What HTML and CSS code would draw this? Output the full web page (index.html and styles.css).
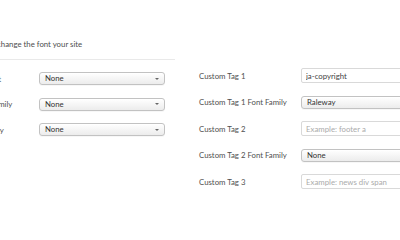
FILE: index.html
```html
<!DOCTYPE html>
<html>
<head>
<meta charset="utf-8">
<link rel="stylesheet" href="styles.css">
</head>
<body>
<div class="page">
  <div class="col-left">
    <p class="intro">Where you can change the font your site</p>
    <div class="divider"></div>
    <div class="fields fields-left">
      <label class="label">Text Font Weight</label>
      <div class="select"><select><option>None</option></select></div>
      <label class="label">Heading Font Family</label>
      <div class="select"><select><option>None</option></select></div>
      <label class="label">Menu Font Family</label>
      <div class="select"><select><option>None</option></select></div>
    </div>
  </div>
  <div class="col-right">
    <div class="fields fields-right">
      <label class="label">Custom Tag 1</label>
      <input class="text" type="text" value="ja-copyright">
      <label class="label">Custom Tag 1 Font Family</label>
      <div class="select select-wide"><select><option>Raleway</option></select></div>
      <label class="label">Custom Tag 2</label>
      <input class="text" type="text" placeholder="Example: footer a">
      <label class="label">Custom Tag 2 Font Family</label>
      <div class="select select-wide"><select><option>None</option></select></div>
      <label class="label">Custom Tag 3</label>
      <input class="text" type="text" placeholder="Example: news div span">
    </div>
  </div>
</div>
</body>
</html>
```
FILE: styles.css
```css
html, body {
  margin: 0;
  background: #fff;
}
body {
  overflow: hidden;
  width: 400px;
  height: 240px;
  font-family: Lato, "Open Sans", sans-serif;
  font-size: 7.8px;
  color: #555;
}
.page {
  display: flex;
  margin-left: -57.6px;
  width: 620px;
}
.col-left {
  width: 232.6px;
  flex: none;
  padding-top: 38px;
}
.intro {
  margin: 0;
  line-height: 12px;
  padding-left: 1px;
  white-space: nowrap;
  color: #4d4d4d;
}
.divider {
  margin-top: 9px;
  border-top: 1px solid #e9e9e9;
}
.fields {
  display: grid;
  row-gap: 12.5px;
  align-items: center;
}
.fields-left {
  margin-top: 12px;
  grid-template-columns: 96.6px 126px;
}
.col-right {
  flex: none;
  margin-left: 24px;
  padding-top: 68px;
}
.fields-right {
  grid-template-columns: 102px 160px;
}
.label {
  white-space: nowrap;
  color: #505050;
}
.select {
  position: relative;
  height: 13px;
}
.select select {
  appearance: none;
  -webkit-appearance: none;
  box-sizing: border-box;
  display: block;
  width: 100%;
  height: 13px;
  margin: 0;
  padding: 0 12px 0 5px;
  border: 1px solid #c2c2c2;
  border-radius: 3px;
  background: linear-gradient(#ffffff, #ececec);
  box-shadow: inset 0 1px 0 #fff, 0 1px 0 rgba(0,0,0,0.03);
  font: inherit;
  line-height: 11px;
  color: #333;
  outline: none;
}
.select::after {
  content: "";
  position: absolute;
  right: 6px;
  top: 5.5px;
  border-left: 2px solid transparent;
  border-right: 2px solid transparent;
  border-top: 2.5px solid #666;
}
.select-wide::after {
  display: none;
}
.text {
  box-sizing: border-box;
  display: block;
  width: 160px;
  height: 15px;
  margin: 0;
  padding: 0 4px;
  border: 1px solid #d9d9d9;
  border-radius: 2px;
  background: #fff;
  font: inherit;
  color: #444;
  outline: none;
}
.text::placeholder {
  color: #ababab;
}
```
